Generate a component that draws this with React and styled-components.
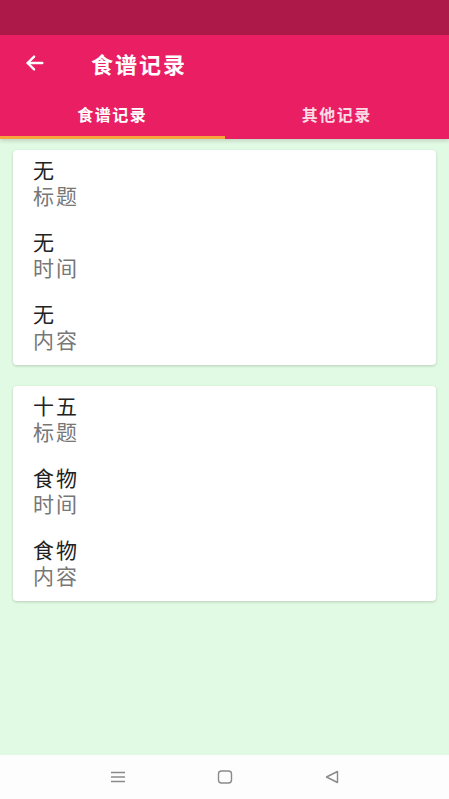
import styled, { createGlobalStyle } from "styled-components";

const GlobalStyle = createGlobalStyle`
  html, body {
    margin: 0;
    padding: 0;
  }
  body {
    font-family: "Noto Sans CJK SC", "Noto Sans", sans-serif;
  }
`;

const Screen = styled.div`
  width: 449px;
  height: 799px;
  display: flex;
  flex-direction: column;
  background-color: #e1fae3;
  overflow: hidden;
`;

const StatusBar = styled.div`
  height: 35px;
  background-color: #ad1a4a;
  flex-shrink: 0;
`;

const Header = styled.div`
  background-color: #e91e63;
  box-shadow: 0 2px 4px rgba(0, 0, 0, 0.15);
  flex-shrink: 0;
`;

const Toolbar = styled.div`
  height: 56px;
  display: flex;
  align-items: center;
  padding-left: 23px;
  gap: 44px;
`;

const BackButton = styled.div`
  width: 24px;
  height: 24px;
  display: flex;
  align-items: center;
  justify-content: center;
`;

const Title = styled.h1`
  margin: 0;
  font-size: 22px;
  font-weight: 700;
  letter-spacing: 2px;
  color: #fff;
`;

const Tabs = styled.div`
  display: grid;
  grid-template-columns: 1fr 1fr;
  height: 48px;
`;

const Tab = styled.div`
  display: flex;
  align-items: center;
  justify-content: center;
  padding-top: 1px;
  font-size: 16px;
  font-weight: 700;
  letter-spacing: 1.5px;
  color: ${(props) => (props.active ? "#fff" : "rgba(255,255,255,0.85)")};
  border-bottom: 3px solid ${(props) => (props.active ? "#f7a43f" : "transparent")};
`;

const Content = styled.div`
  flex: 1;
  padding: 11px 13px 0;
  display: flex;
  flex-direction: column;
  gap: 21px;
`;

const Card = styled.div`
  background-color: #fff;
  border-radius: 4px;
  box-shadow: 0 1px 3px rgba(0, 0, 0, 0.18);
  padding: 6px 20px 13px;
  display: flex;
  flex-direction: column;
  gap: 20px;
`;

const Field = styled.div`
  display: flex;
  flex-direction: column;
`;

const Value = styled.div`
  font-size: 21px;
  line-height: 26px;
  letter-spacing: 2px;
  color: #222;
`;

const Label = styled.div`
  font-size: 21px;
  line-height: 26px;
  letter-spacing: 2px;
  color: #777;
`;

const NavBar = styled.div`
  height: 44px;
  background-color: #fdfdfd;
  display: flex;
  align-items: center;
  justify-content: center;
  gap: 91px;
  flex-shrink: 0;
`;

const NavIcon = styled.svg`
  width: 16px;
  height: 16px;
  stroke: #8a8a8a;
  fill: none;
  stroke-width: 1.4;
`;

const records = [
  [
    { value: "无", label: "标题" },
    { value: "无", label: "时间" },
    { value: "无", label: "内容" },
  ],
  [
    { value: "十五", label: "标题" },
    { value: "食物", label: "时间" },
    { value: "食物", label: "内容" },
  ],
];

const App = () => {
  return (
    <Screen>
      <GlobalStyle />
      <StatusBar />
      <Header>
        <Toolbar>
          <BackButton>
            <svg width="22" height="22" viewBox="0 0 24 24" fill="none" stroke="#fff" strokeWidth="2.6" strokeLinecap="round" strokeLinejoin="round">
              <path d="M20 12H4" />
              <path d="M11 5l-7 7 7 7" />
            </svg>
          </BackButton>
          <Title>食谱记录</Title>
        </Toolbar>
        <Tabs>
          <Tab active>食谱记录</Tab>
          <Tab>其他记录</Tab>
        </Tabs>
      </Header>
      <Content>
        {records.map((fields, i) => (
          <Card key={i}>
            {fields.map((f, j) => (
              <Field key={j}>
                <Value>{f.value}</Value>
                <Label>{f.label}</Label>
              </Field>
            ))}
          </Card>
        ))}
      </Content>
      <NavBar>
        <NavIcon viewBox="0 0 16 16">
          <path d="M1 3.5h14M1 8h14M1 12.5h14" />
        </NavIcon>
        <NavIcon viewBox="0 0 16 16">
          <rect x="1.5" y="2" width="13" height="12" rx="3" />
        </NavIcon>
        <NavIcon viewBox="0 0 16 16">
          <path d="M13.5 2.5v11L2.5 8z" strokeLinejoin="round" />
        </NavIcon>
      </NavBar>
    </Screen>
  );
};

export default App;
